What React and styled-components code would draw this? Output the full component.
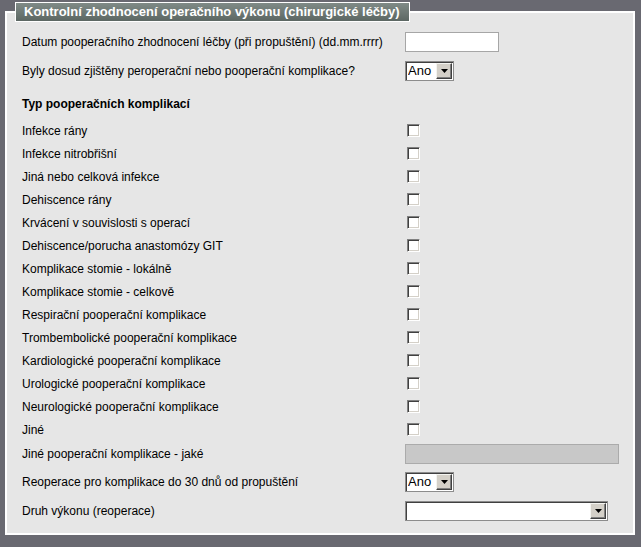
import styled, { createGlobalStyle } from "styled-components";

const GlobalStyle = createGlobalStyle`
  html, body {
    margin: 0;
    background: #696971;
  }
  body {
    font-family: "Liberation Sans", Arial, sans-serif;
  }
`;

const Page = styled.div`
  padding: 2px 6px 12px 5px;
`;

const Panel = styled.fieldset`
  margin: 0;
  padding: 5px 0 8px 15px;
  min-width: 0;
  border: 2px solid #fff;
  background: #e6e6e6;
`;

const Legend = styled.legend`
  margin-left: -7px;
  padding: 0 9px 0 8px;
  height: 20px;
  box-sizing: border-box;
  line-height: 18px;
  border: 1px solid #fff;
  background: linear-gradient(#808b87, #5c6763);
  color: #fff;
  font-size: 13px;
  font-weight: bold;
`;

const Row = styled.div`
  display: grid;
  grid-template-columns: 383px auto;
  align-items: center;
  height: ${(p) => p.$h || 23}px;
  font-size: 12px;
  color: #000;
`;

const Label = styled.span`
  font-weight: ${(p) => (p.$bold ? "bold" : "normal")};
  padding-top: ${(p) => (p.$bold ? 3 : 0)}px;
`;

const TextInput = styled.input`
  box-sizing: border-box;
  width: ${(p) => p.$w}px;
  height: 20px;
  margin: 0;
  padding: 0 2px;
  border: 1px solid ${(p) => (p.disabled ? "#ababab" : "#a6a6a6")};
  background: ${(p) => (p.disabled ? "#c8c8c8" : "#fff")};
  font: 13px "Liberation Sans", Arial, sans-serif;
`;

const Check = styled.input.attrs({ type: "checkbox" })`
  appearance: none;
  box-sizing: border-box;
  width: 13px;
  height: 13px;
  margin: 0 0 0 2px;
  border: 1px solid;
  border-color: #808080 #fff #fff #808080;
  box-shadow: inset 1px 1px #404040, inset -1px -1px #d4d0c8;
  background: #fff;
`;

const SelectWrap = styled.div`
  position: relative;
  box-sizing: border-box;
  width: ${(p) => p.$w}px;
  height: 20px;
  border: 1px solid #8c8c8c;
  box-shadow: inset 1px 1px #404040;
  background: #fff;
`;

const Select = styled.select`
  appearance: none;
  box-sizing: border-box;
  width: 100%;
  height: 100%;
  margin: 0;
  padding: 0 0 0 2px;
  border: none;
  background: transparent;
  color: #000;
  font: 13px "Liberation Sans", Arial, sans-serif;
  outline: none;
`;

const Arrow = styled.span`
  position: absolute;
  top: 1px;
  right: 1px;
  bottom: 1px;
  width: 16px;
  box-sizing: border-box;
  display: flex;
  align-items: center;
  justify-content: center;
  border: 1px solid;
  border-color: #f4f4f0 #404040 #404040 #f4f4f0;
  box-shadow: inset -1px -1px #808080;
  background: #d4d0c8;
  pointer-events: none;
`;

const Dropdown = ({ w, value, options }) => (
  <SelectWrap $w={w}>
    <Select defaultValue={value}>
      {options.map((o) => (
        <option key={o}>{o}</option>
      ))}
    </Select>
    <Arrow>
      <svg width="7" height="4" viewBox="0 0 7 4">
        <polygon points="0,0 7,0 3.5,4" fill="#000" />
      </svg>
    </Arrow>
  </SelectWrap>
);

const complications = [
  "Infekce rány",
  "Infekce nitrobřišní",
  "Jiná nebo celková infekce",
  "Dehiscence rány",
  "Krvácení v souvislosti s operací",
  "Dehiscence/porucha anastomózy GIT",
  "Komplikace stomie - lokálně",
  "Komplikace stomie - celkově",
  "Respirační pooperační komplikace",
  "Trombembolické pooperační komplikace",
  "Kardiologické pooperační komplikace",
  "Urologické pooperační komplikace",
  "Neurologické pooperační komplikace",
  "Jiné",
];

export default function App() {
  return (
    <Page>
      <GlobalStyle />
      <Panel>
        <Legend>Kontrolní zhodnocení operačního výkonu (chirurgické léčby)</Legend>
        <Row $h={29}>
          <Label>Datum pooperačního zhodnocení léčby (při propuštění) (dd.mm.rrrr)</Label>
          <TextInput $w={94} />
        </Row>
        <Row $h={29}>
          <Label>Byly dosud zjištěny peroperační nebo pooperační komplikace?</Label>
          <Dropdown w={49} value="Ano" options={["Ano", "Ne"]} />
        </Row>
        <Row $h={34}>
          <Label $bold>Typ pooperačních komplikací</Label>
        </Row>
        {complications.map((c) => (
          <Row key={c}>
            <Label>{c}</Label>
            <Check />
          </Row>
        ))}
        <Row $h={26}>
          <Label>Jiné pooperační komplikace - jaké</Label>
          <TextInput $w={214} disabled />
        </Row>
        <Row $h={29}>
          <Label>Reoperace pro komplikace do 30 dnů od propuštění</Label>
          <Dropdown w={49} value="Ano" options={["Ano", "Ne"]} />
        </Row>
        <Row $h={29}>
          <Label>Druh výkonu (reoperace)</Label>
          <Dropdown w={203} value="" options={[""]} />
        </Row>
      </Panel>
    </Page>
  );
}
